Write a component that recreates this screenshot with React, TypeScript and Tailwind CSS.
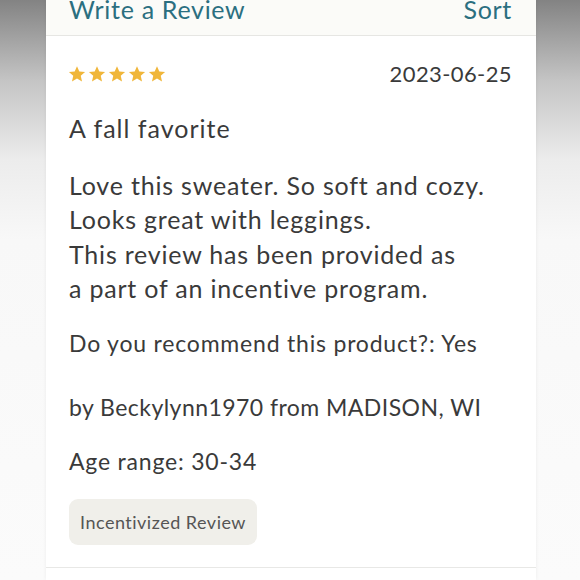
export default function App() {
  const font = { fontFamily: 'Lato, "Noto Sans", sans-serif' }
  return (
    <div
      className="w-[580px] h-[580px] overflow-hidden flex bg-[linear-gradient(to_bottom,#838383_0px,#c4c4c4_80px,#ececec_160px,#f8f8f8_240px,#fbfbfb_580px)]"
      style={font}
    >
      <div className="w-[46px] shrink-0" />
      <div className="w-[490px] shrink-0 bg-white flex flex-col shadow-[0_0_4px_rgba(0,0,0,0.06)]">
        {/* Header */}
        <div className="h-[36px] bg-[#fbfbf8] border-b border-[#e6e6e3] flex items-end justify-between pl-[23px] pr-[24px] pb-[13px]">
          <span className="text-[25px] leading-none tracking-[0.7px] text-[#2b6f80]">Write a Review</span>
          <span className="text-[25px] leading-none tracking-[0.7px] text-[#2b6f80]">Sort</span>
        </div>

        {/* Review */}
        <div className="pl-[23px] pr-[24px] flex flex-col text-[#3a3a3a]">
          <div className="flex items-center justify-between mt-[25px] h-[26px]">
            <div className="flex gap-[2px] -ml-[1px] text-[#f0b63a]">
              {[0, 1, 2, 3, 4].map((i) => (
                <svg key={i} width="18" height="18" viewBox="0 0 24 24" fill="currentColor">
                  <path d="M12 1.5l3.1 7.1 7.7.7-5.8 5.1 1.7 7.6L12 18.1 5.3 22l1.7-7.6L1.2 9.3l7.7-.7z" />
                </svg>
              ))}
            </div>
            <span className="text-[22px] leading-none tracking-[0.4px]">2023-06-25</span>
          </div>

          <div className="text-[25px] leading-none tracking-[1px] mt-[29px]">A fall favorite</div>

          <div className="text-[25px] leading-[34.3px] tracking-[0.8px] mt-[27px]">
            <div>Love this sweater. So soft and cozy.</div>
            <div>Looks great with leggings.</div>
            <div>This review has been provided as</div>
            <div>a part of an incentive program.</div>
          </div>

          <div className="text-[23px] leading-none tracking-[0.8px] mt-[27px]">Do you recommend this product?: Yes</div>

          <div className="text-[23px] leading-none tracking-[0.45px] mt-[41px]">by Beckylynn1970 from MADISON, WI</div>

          <div className="text-[23px] leading-none tracking-[0.8px] mt-[31px]">Age range: 30-34</div>

          <div className="mt-[26px]">
            <span className="inline-flex items-center h-[46px] px-[11px] rounded-[9px] bg-[#f0efea] text-[18px] tracking-[0.5px] text-[#555]">
              Incentivized Review
            </span>
          </div>
        </div>
        <div className="mt-[22px] border-b border-[#e8e8e6]" />
      </div>
      <div className="flex-1" />
    </div>
  )
}
